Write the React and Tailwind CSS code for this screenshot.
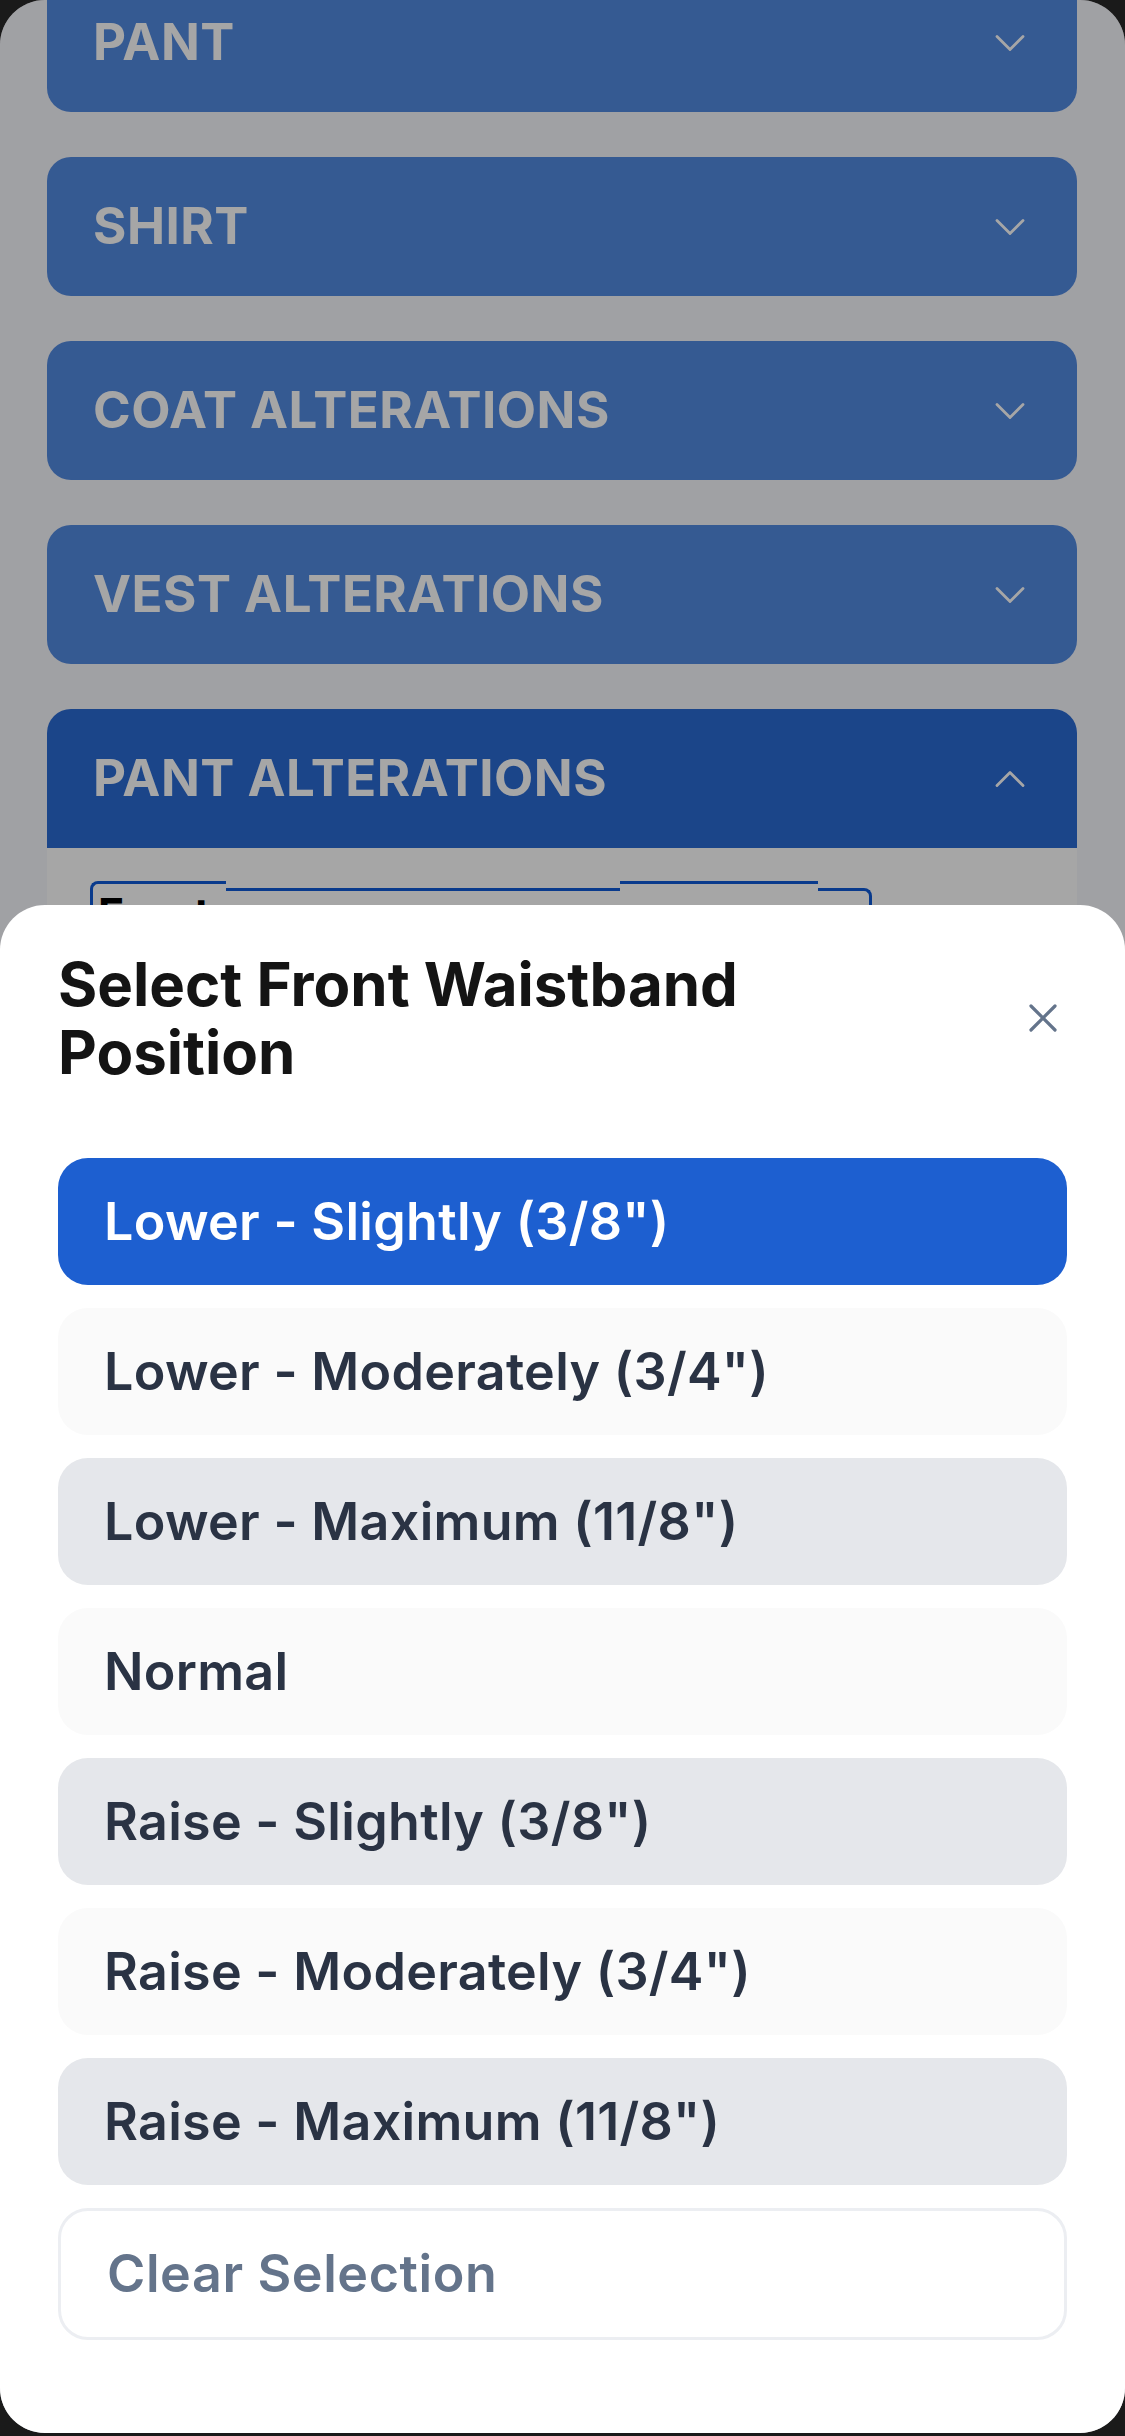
import { ChevronDown, ChevronUp } from "lucide-react";

const sections = ["PANT", "SHIRT", "COAT ALTERATIONS", "VEST ALTERATIONS"];

const options = [
  'Lower - Slightly (3/8")',
  'Lower - Moderately (3/4")',
  'Lower - Maximum (11/8")',
  "Normal",
  'Raise - Slightly (3/8")',
  'Raise - Moderately (3/4")',
  'Raise - Maximum (11/8")',
];

const font = { fontFamily: "Inter, 'Noto Sans', sans-serif" };

function SectionCard({ title }) {
  return (
    <div className="h-[139px] rounded-[24px] bg-[#528ae1] pl-[46px] pr-[41px] flex items-center justify-between">
      <span className="text-[51px] font-bold text-white tracking-[0.5px]">{title}</span>
      <ChevronDown size={52} strokeWidth={1.3} className="text-white" />
    </div>
  );
}

function OpenSection() {
  return (
    <div className="rounded-t-[24px] overflow-hidden">
      <div className="h-[139px] bg-[#2a6ad3] pl-[46px] pr-[41px] flex items-center justify-between">
        <span className="text-[51px] font-bold text-white tracking-[0.5px]">PANT ALTERATIONS</span>
        <ChevronUp size={52} strokeWidth={1.3} className="text-white" />
      </div>
      <div className="bg-white pt-[33px] pl-[43px] h-[400px]">
        <div className="flex w-[782px]">
          <div className="w-[136px] h-[80px] border-l-[3px] border-t-[3px] border-[#0f5ad8] rounded-tl-[8px] pl-[5px] pt-[8px]">
            <span className="text-[44px] font-bold text-black leading-none">Front</span>
          </div>
          <div className="w-[394px] h-[80px] mt-[7px] border-t-[3px] border-[#0f5ad8]" />
          <div className="w-[198px] h-[80px] border-t-[3px] border-[#0f5ad8]" />
          <div className="w-[54px] h-[80px] mt-[7px] border-t-[3px] border-r-[3px] border-[#0f5ad8] rounded-tr-[8px]" />
        </div>
      </div>
    </div>
  );
}

function OptionButton({ label, index, selected }) {
  const base = "h-[127px] w-full rounded-[30px] pl-[46px] flex items-center text-left text-[52px] font-semibold tracking-[0.3px]";
  if (selected) {
    return <button type="button" className={`${base} bg-[#1d5fd0] text-white`}>{label}</button>;
  }
  // rows alternate: odd rows nearly white, even rows gray
  const tone = index % 2 === 0 ? "bg-[#e5e7eb]" : "bg-[#fafafa]";
  return <button type="button" className={`${base} ${tone} text-[#2a3344]`}>{label}</button>;
}

export default function App() {
  return (
    <div className="w-[1125px] h-[2436px] bg-[#1a1a1a] overflow-hidden" style={font}>
      <div className="relative w-[1125px] h-[2433px] rounded-[45px] overflow-hidden bg-[#f6f7fc]">
        <div className="px-[47px] pr-[48px] -mt-[27px] flex flex-col gap-[45px]">
          {sections.map((s) => (
            <SectionCard key={s} title={s} />
          ))}
          <OpenSection />
        </div>

        <div className="absolute inset-0 bg-black/35" />

        <div className="absolute left-0 right-0 top-[905px] bottom-0 bg-white rounded-t-[45px] px-[58px] pt-[45px]">
          <div className="flex items-center justify-between">
            <h2 className="max-w-[820px] text-[60px] leading-[68px] font-bold text-[#141414]">
              Select Front Waistband Position
            </h2>
            <button type="button" className="w-[48px] h-[48px] flex items-center justify-center text-[#64748b]">
              <svg width="30" height="30" viewBox="0 0 30 30" fill="none" stroke="currentColor" strokeWidth="3.2" strokeLinecap="round">
                <path d="M3 3 27 27M27 3 3 27" />
              </svg>
            </button>
          </div>

          <div className="mt-[72px] flex flex-col gap-[23px]">
            {options.map((o, i) => (
              <OptionButton key={o} label={o} index={i} selected={i === 0} />
            ))}
            <button
              type="button"
              className="h-[132px] w-full rounded-[30px] border-[3px] border-[#eceef2] bg-white pl-[46px] flex items-center text-left text-[52px] font-semibold tracking-[0.6px] text-[#64748b]"
            >
              Clear Selection
            </button>
          </div>
        </div>
      </div>
    </div>
  );
}
